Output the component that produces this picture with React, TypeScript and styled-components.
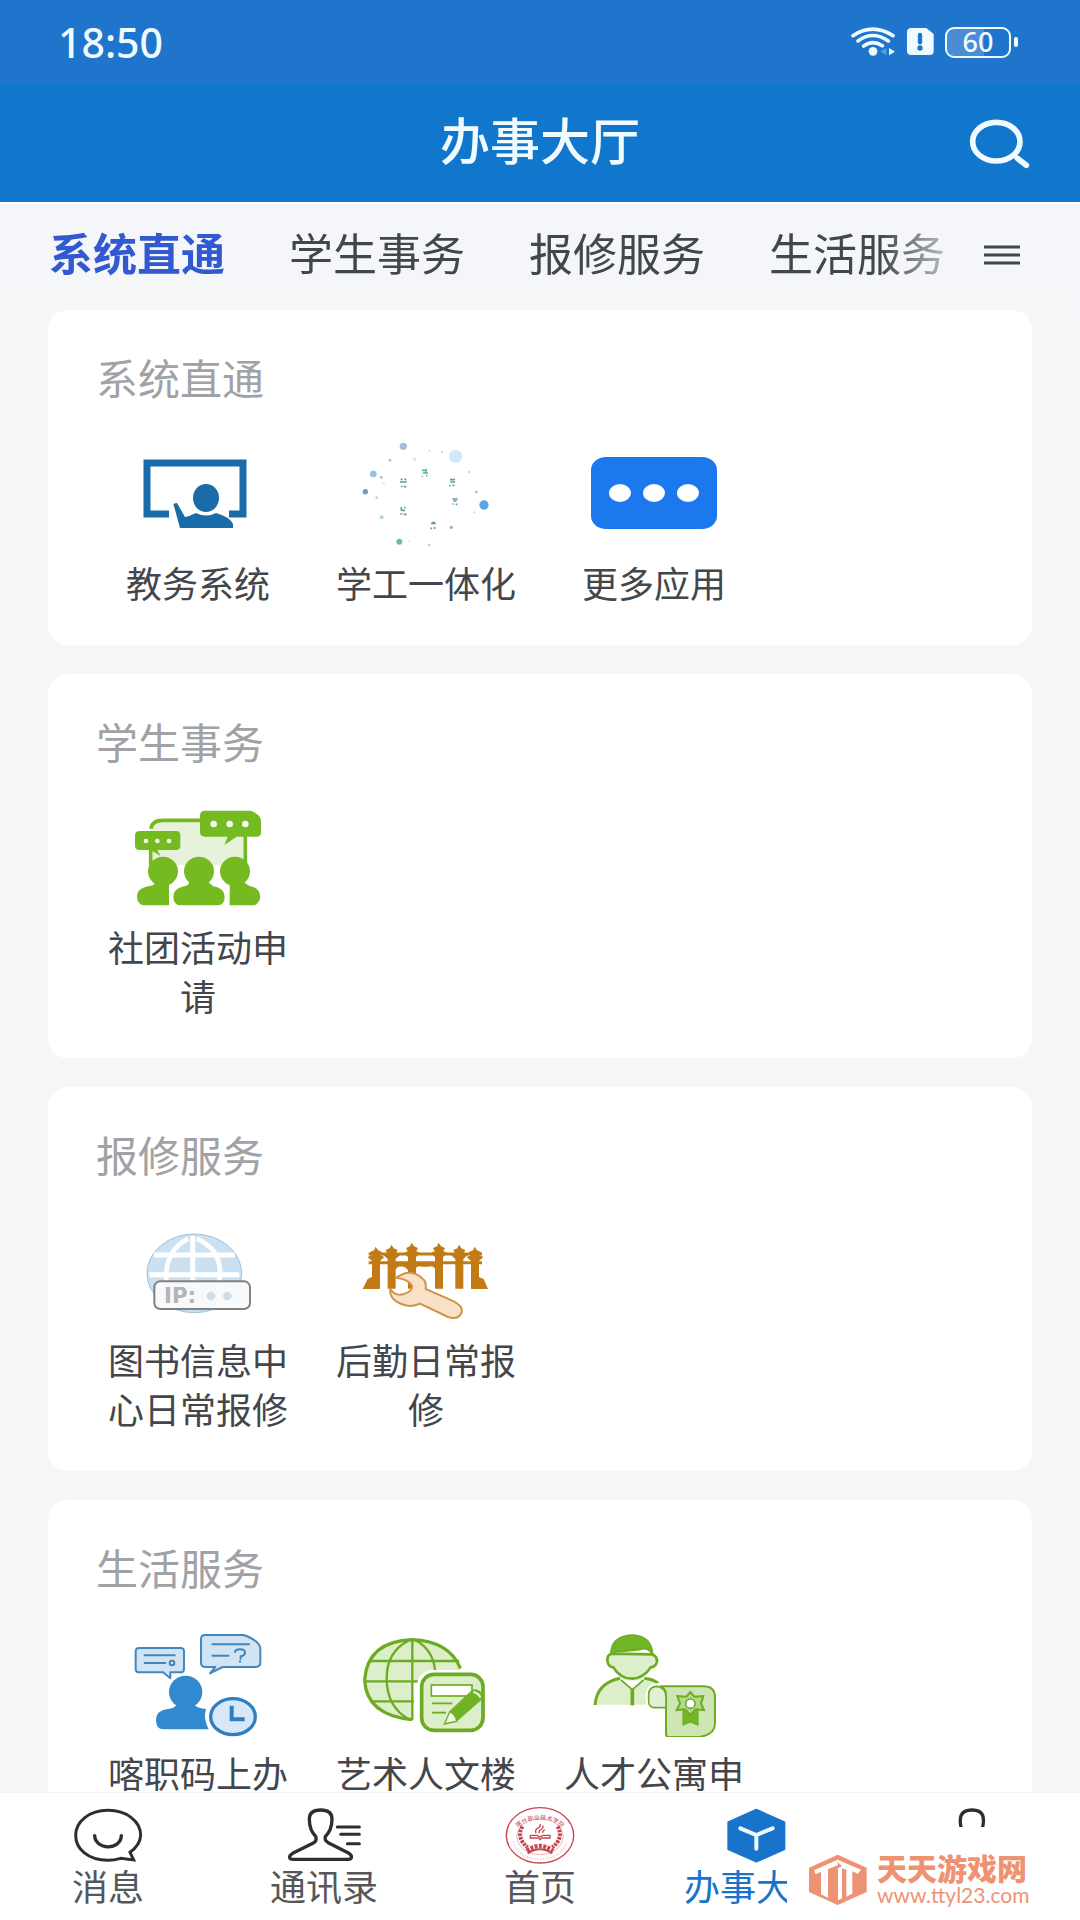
import { useState } from 'react';
import type { ReactNode } from 'react';
import styled, { createGlobalStyle } from 'styled-components';

const theme = {
  colors: {
    status: '#1e75cb',
    header: '#1177cd',
    onHeader: '#effbff',
    tabs: '#f4f6fb',
    page: '#f4f6f8',
    card: '#ffffff',
    accent: '#3159d0',
    text: '#43464b',
    muted: '#a0a2a6',
    navText: '#55575b',
    watermark: '#ee9274',
  },
};

const GlobalStyle = createGlobalStyle`
  * {
    box-sizing: border-box;
  }
  body {
    margin: 0;
    font-family: 'Noto Sans', 'Noto Sans CJK SC', sans-serif;
    color: ${theme.colors.text};
    background: ${theme.colors.page};
  }
  a {
    color: inherit;
    text-decoration: none;
  }
  button {
    padding: 0;
    border: none;
    background: none;
    font: inherit;
    color: inherit;
    cursor: pointer;
  }
`;

/* ---------- service icons ---------- */

const TeachingIcon = () => (
  <ServiceIcon viewBox="1 0 140 110">
    <path d="M42 77H20V26H116V77H102" fill="none" stroke="#1a6ca8" strokeWidth="7" />
    <ellipse cx="79" cy="61" rx="13" ry="14" fill="#1a6ca8" />
    <path
      d="M53 91 L47 69 Q45 66 50 66 L58 80 Q63 79 69 76 Q79 81 89 76 Q103 80 106 87 V91Z"
      fill="#1a6ca8"
    />
  </ServiceIcon>
);

const scatter: [number, number, number, string][] = [
  [190, 49, 11, '#a9bddb'],
  [347, 79, 20, '#d0e8fc'],
  [100, 132, 10, '#92bfe3'],
  [76, 185, 8, '#6f9fae'],
  [432, 225, 14, '#5ba3e4'],
  [178, 335, 9, '#70b9c0'],
  [125, 262, 6, '#b5d5d9'],
  [150, 91, 4, '#a6b8bd'],
  [224, 88, 4, '#cfdde2'],
  [268, 62, 3, '#c9dde2'],
  [306, 66, 3, '#c0d3dc'],
  [388, 126, 4, '#d3dde4'],
  [409, 186, 4, '#9bbcc6'],
  [403, 247, 3, '#c5d5dc'],
  [334, 292, 5, '#9fb3bb'],
  [268, 345, 4, '#b7cfd2'],
  [208, 334, 3, '#dcebed'],
  [124, 142, 4, '#a7bcc2'],
  [131, 160, 4, '#dfe9eb'],
  [110, 203, 4, '#c4d2d8'],
];

const StudentWorkIcon = () => (
  <ServiceIcon viewBox="48 21 420 330">
    {scatter.map(([cx, cy, r, fill]) => (
      <circle key={`${cx}-${cy}`} cx={cx} cy={cy} r={r} fill={fill} />
    ))}
    <path
      d="M246 121h9M258 116v13M248 129h16M258 137h4M245 139h3"
      stroke="#57b5a5"
      strokeWidth="5"
    />
    <path
      d="M182 148h6M193 148h6M180 156h20M183 169h4M191 170h8M330 149h15M331 156h14M328 167h4M337 166h6M337 207h16M340 213h10M337 222h4M347 223h5M184 231v11M195 230v5M184 241h11M181 252h6M191 253h9M273 280h14M276 278h9M271 295h5M280 294h7"
      stroke="#6697a4"
      strokeWidth="5"
    />
  </ServiceIcon>
);

const MoreAppsIcon = () => (
  <ServiceIcon viewBox="1 0 140 110">
    <rect x="8" y="20" width="126" height="72" rx="15" ry="13" fill="#1b79ed" />
    {[37, 71, 105].map((cx) => (
      <ellipse key={cx} cx={cx} cy="56" rx="11" ry="9" fill="#fff" />
    ))}
  </ServiceIcon>
);

const ClubIcon = () => (
  <ServiceIcon viewBox="24 33 420 330">
    <path d="M92 110 Q98 91 125 91H376V225H92Z" fill="#e6f2da" />
    <path
      d="M93 116 Q96 91 128 91H245M376 135V225M92 180V225"
      fill="none"
      stroke="#74b823"
      strokeWidth="11"
    />
    <path
      d="M255 62H392Q423 74 423 92V128Q423 140 410 140H350L313 165L323 140H255Q240 140 240 126V76Q240 62 255 62Z"
      fill="#76ba21"
    />
    <path
      d="M60 123H168Q181 123 181 136V168Q181 180 168 180H112L122 198L92 180H60Q45 180 45 168V136Q45 123 60 123Z"
      fill="#76ba21"
    />
    <g fill="#f4faec">
      <circle cx="281" cy="102" r="10" />
      <circle cx="329" cy="102" r="10" />
      <circle cx="376" cy="102" r="10" />
      <circle cx="78" cy="153" r="7" />
      <circle cx="112" cy="153" r="7" />
      <circle cx="147" cy="153" r="7" />
    </g>
    <g fill="#76ba21">
      <ellipse cx="129" cy="244" rx="45" ry="44" />
      <ellipse cx="237" cy="244" rx="45" ry="44" />
      <ellipse cx="345" cy="244" rx="45" ry="44" />
      <path d="M104 276Q106 287 84 289Q51 295 51 320Q51 340 70 346H147V276Z" />
      <path d="M208 276Q206 288 187 290Q160 296 160 320Q160 346 184 346H290Q314 346 314 320Q312 294 280 289L264 276Z" />
      <path d="M329 276V346H405Q421 334 421 320Q418 292 390 289L370 276Z" />
    </g>
  </ServiceIcon>
);

const IpIcon = () => (
  <ServiceIcon viewBox="24 12 420 330">
    <ellipse cx="223" cy="190" rx="142" ry="118" fill="#cbe1f2" stroke="#a3bfd3" strokeWidth="3" />
    <g fill="none" stroke="#fff">
      <path d="M218 78V215M102 135H344M88 194H358" strokeWidth="15" />
      <path d="M205 86Q133 122 139 214M230 86Q312 122 298 214" strokeWidth="14" />
    </g>
    <rect x="103" y="214" width="287" height="83" rx="18" fill="#f8f9fa" stroke="#7f8184" strokeWidth="6" />
    <text x="132" y="280" fontFamily="DejaVu Sans" fontSize="64" fontWeight="700" fill="#b4b4b5">
      IP:
    </text>
    <circle cx="273" cy="258" r="13" fill="#cedded" />
    <circle cx="322" cy="258" r="13" fill="#cedded" />
  </ServiceIcon>
);

const posts = [767, 814, 875, 956, 1017, 1064];

const RepairIcon = () => (
  <ServiceIcon viewBox="708 12 420 330">
    <path d="M746 132H1086M746 158H1086" stroke="#c27a14" strokeWidth="9" />
    {posts.map((x, i) => {
      const top = i === 2 || i === 3 ? 98 : i === 1 || i === 4 ? 104 : 110;
      return (
        <path
          key={x}
          d={`M${x} ${top}l7 11l12 5l-5 10l12 5l-13 12V236h-24V${top + 43}l-13 -12l12 -5l-5 -10l12 -5Z`}
          fill="#c27a14"
        />
      );
    })}
    <path
      d="M776 182Q772 193 743 207L728 237H776ZM1055 182Q1060 196 1091 207L1104 237H1055ZM842 170Q833 168 824 182V158H865V182Q855 168 842 170ZM885 162H946V176Q937 166 925 170H906Q895 166 885 176Z"
      fill="#c27a14"
    />
    <path
      d="M829 203Q875 170 913 211Q919 221 917 237L1003 275Q1032 292 1024 309Q1014 331 984 321L900 281Q866 297 830 275Q807 260 811 237Q825 259 850 253Q881 243 875 226Q865 208 829 203Z"
      fill="#f8e1c6"
      stroke="#cf934a"
      strokeWidth="6"
    />
  </ServiceIcon>
);

const CodeServiceIcon = () => (
  <ServiceIcon viewBox="24 21 420 330">
    <g fill="#d0e4f6" stroke="#4388bd" strokeWidth="6" strokeLinejoin="round">
      <path d="M58 84H181Q192 84 192 94V146Q192 157 181 157H151V175L129 157H58Q47 157 47 146V94Q47 84 58 84Z" />
      <path d="M255 45H370Q421 62 421 88V127Q421 141 407 141H308L270 160L286 141H255Q243 141 243 127V58Q243 45 255 45Z" />
    </g>
    <g fill="none" stroke="#4584b4" strokeWidth="6" strokeLinecap="round">
      <path d="M74 106H164M74 129H136M277 73H387M277 107H325" />
      <circle cx="156" cy="129" r="7" />
      <path d="M345 96Q347 88 360 88Q375 88 375 98Q375 106 362 109V116M360 124V125" />
    </g>
    <g fill="#3289cd">
      <ellipse cx="197" cy="216" rx="50" ry="49" />
      <path d="M170 253Q166 265 143 267Q108 272 108 300Q108 328 130 328H266Q249 297 258 267Q231 266 222 253Z" />
    </g>
    <ellipse cx="339" cy="290" rx="67" ry="54" fill="#d7e9f8" stroke="#2e7fc0" strokeWidth="10" />
    <path d="M335 257V298H374" fill="none" stroke="#2e7fc0" strokeWidth="12" />
  </ServiceIcon>
);

const ArtBuildingIcon = () => (
  <ServiceIcon viewBox="708 21 420 330">
    <path
      d="M877 300Q735 288 734 180Q742 64 877 59Q1000 63 1026 158V190H877Z"
      fill="#dcefca"
    />
    <g fill="none" stroke="#6dac22">
      <path d="M877 299Q739 286 734 180Q742 64 877 59Q989 64 1021 145" strokeWidth="10" />
      <path
        d="M877 60V300M747 123H1017M736 184H900M757 244H882M867 61Q798 95 800 180Q802 262 867 298M887 61Q939 90 945 150"
        strokeWidth="7"
      />
    </g>
    <rect x="892" y="150" width="210" height="200" rx="44" fill="#fff" />
    <rect x="905" y="163" width="184" height="168" rx="37" fill="#dceeca" stroke="#6dac22" strokeWidth="11" />
    <rect x="934" y="195" width="122" height="33" fill="#fff" stroke="#6dac22" strokeWidth="5" />
    <path d="M936 250H997M936 278H978" stroke="#6dac22" strokeWidth="5" />
    <path d="M990 272L1058 208Q1078 206 1088 222L1084 240L1010 305Z" fill="#70b425" />
    <path d="M990 274L973 312L1009 304Q1011 287 990 274Z" fill="#eef7e5" stroke="#6dac22" strokeWidth="4" />
    <path d="M1060 216Q1077 220 1081 233" fill="none" stroke="#eef7e5" strokeWidth="6" />
  </ServiceIcon>
);

const TalentFlatIcon = () => (
  <ServiceIcon viewBox="492 21 420 330">
    <path d="M525 254Q530 190 600 175H676Q700 178 715 190L690 254Z" fill="#dcefca" />
    <path
      d="M573 101Q559 106 563 126Q566 141 580 142Q600 176 637 176Q672 174 692 142Q709 140 711 124Q711 109 697 103Z"
      fill="#dcefca"
      stroke="#6dac22"
      strokeWidth="8"
    />
    <path
      d="M572 104Q574 47 637 45Q694 47 698 103Q683 81 662 88Q614 94 592 94Z"
      fill="#72b627"
      stroke="#6dac22"
      strokeWidth="5"
    />
    <path d="M601 176L637 212L673 176Q638 188 601 176Z" fill="#fff" />
    <g fill="none" stroke="#6dac22">
      <path d="M525 255Q530 190 600 175M673 175Q700 178 715 190" strokeWidth="9" />
      <path d="M603 180L637 209L671 180" strokeWidth="5" />
      <path d="M637 206V256" strokeWidth="11" />
    </g>
    <path
      d="M738 263H702Q686 262 686 244V222Q688 201 708 199H850Q885 202 885 230V318Q880 350 838 351H746Q738 351 738 343Z"
      fill="#fff"
      stroke="#fff"
      strokeWidth="18"
    />
    <path
      d="M720 199Q740 205 738 230V343Q738 351 746 351H838Q885 344 885 310V230Q884 199 850 199Z"
      fill="#cde6b4"
      stroke="#6dac22"
      strokeWidth="6"
    />
    <path
      d="M738 263H702Q686 262 686 244V222Q688 201 708 199Q738 201 738 231Z"
      fill="#e2f1d5"
      stroke="#6dac22"
      strokeWidth="5"
    />
    <path d="M787 266V318L811 308L836 318V266Z" fill="#72b627" />
    <path
      d="M811 216L823 230L850 228L843 250L852 270L827 268L811 284L795 268L770 270L780 250L772 228L799 230Z"
      fill="#b4d88f"
      stroke="#6dac22"
      strokeWidth="6"
    />
    <circle cx="811" cy="251" r="14" fill="#fff" stroke="#6dac22" strokeWidth="5" />
  </ServiceIcon>
);

/* ---------- bottom bar icons ---------- */

const MessageIcon = () => (
  <NavIcon viewBox="198 78 252 180">
    <g fill="none" stroke="#2e2e2e" strokeWidth="9" strokeLinecap="round">
      <path d="M362 235Q342 241 324 241C264 241 227 207 227 166C227 124 268 91 324 91C380 91 422 124 422 166Q420 195 390 217L401 240Z" />
      <path d="M284 167C286 211 362 212 364 167" strokeWidth="10" />
    </g>
  </NavIcon>
);

const ContactsIcon = () => (
  <NavIcon viewBox="846 78 252 180">
    <g fill="none" stroke="#2e2e2e" strokeWidth="10" strokeLinecap="round" strokeLinejoin="round">
      <path d="M962 90C941 90 928 98 928 117C928 145 936 156 947 169Q952 182 940 189L878 220C864 229 867 238 880 238H1044C1058 237 1057 227 1047 220L986 189Q972 181 976 170C987 157 996 145 996 117C996 98 983 90 962 90Z" />
      <path d="M1012 141H1078M1022 163H1078M1042 191H1078" strokeWidth="9" />
    </g>
  </NavIcon>
);

const CampusIcon = () => (
  <NavIcon viewBox="114 78 252 180">
    <defs>
      <path id="crest-top" d="M163 158A82 60 0 0 1 317 158" />
    </defs>
    <g fill="none" stroke="#c8464f">
      <ellipse cx="240" cy="166" rx="101" ry="83" strokeWidth="4" />
      <ellipse cx="240" cy="170" rx="69" ry="54" strokeWidth="2" opacity="0.6" />
      <path d="M160 184Q174 235 240 238Q306 235 320 184" strokeWidth="5" strokeDasharray="3 5" opacity="0.35" />
      <path d="M187 139Q168 174 203 202M293 139Q312 174 277 202" strokeWidth="12" strokeDasharray="8 3" />
      <path d="M201 213Q240 183 279 213" strokeWidth="13" strokeDasharray="9 4" />
      <path d="M203 220Q240 196 277 220" strokeWidth="6" />
      <path d="M211 166V174H235L240 179L245 174H270V166H248L240 171L232 166Z" strokeWidth="4" />
      <path
        d="M228 160Q223 148 236 143Q243 138 240 132M238 160Q235 151 245 147Q251 143 248 137M248 159Q247 153 254 149"
        strokeWidth="4"
      />
    </g>
    <text fontFamily="Noto Sans CJK SC" fontSize="18" fill="#c8464f">
      <textPath href="#crest-top" startOffset="50%" textAnchor="middle">
        喀什职业技术学院
      </textPath>
    </text>
  </NavIcon>
);

const HallIcon = () => (
  <NavIcon viewBox="762 78 252 180">
    <path
      d="M889 88L974 126V208L889 246L804 208V126Z"
      fill="#1874cb"
      stroke="#1874cb"
      strokeWidth="4"
      strokeLinejoin="round"
    />
    <path
      d="M841 145L889 165L938 145M889 165V206"
      fill="none"
      stroke="#effaff"
      strokeWidth="12"
      strokeLinecap="round"
    />
  </NavIcon>
);

const ProfileIcon = () => (
  <NavIcon viewBox="450 78 252 180">
    <path d="M545 150C535 112 541 90 576 90C611 90 616 112 606 150" fill="none" stroke="#2e2e2e" strokeWidth="10" />
  </NavIcon>
);

/* ---------- data ---------- */

type Service = { name: string; icon: ReactNode };
type Group = { title: string; services: Service[] };

const groups: Group[] = [
  {
    title: '系统直通',
    services: [
      { name: '教务系统', icon: <TeachingIcon /> },
      { name: '学工一体化', icon: <StudentWorkIcon /> },
      { name: '更多应用', icon: <MoreAppsIcon /> },
    ],
  },
  {
    title: '学生事务',
    services: [{ name: '社团活动申请', icon: <ClubIcon /> }],
  },
  {
    title: '报修服务',
    services: [
      { name: '图书信息中心日常报修', icon: <IpIcon /> },
      { name: '后勤日常报修', icon: <RepairIcon /> },
    ],
  },
  {
    title: '生活服务',
    services: [
      { name: '喀职码上办', icon: <CodeServiceIcon /> },
      { name: '艺术人文楼', icon: <ArtBuildingIcon /> },
      { name: '人才公寓申', icon: <TalentFlatIcon /> },
    ],
  },
];

const navItems = [
  { label: '消息', icon: <MessageIcon /> },
  { label: '通讯录', icon: <ContactsIcon /> },
  { label: '首页', icon: <CampusIcon /> },
  { label: '办事大厅', icon: <HallIcon />, active: true },
];

/* ---------- page ---------- */

const App = () => {
  const [current, setCurrent] = useState(groups[0].title);

  return (
    <Screen>
      <GlobalStyle />
      <StatusBar>
        <Clock>18:50</Clock>
        <StatusIcons>
          <svg width="46" height="36" viewBox="87 72 138 108" aria-hidden="true">
            <g fill="none" stroke="#effbff" strokeWidth="11" strokeLinecap="round">
              <path d="M96 107Q155 68 216 107M111 123Q155 90 202 123M128 138Q155 118 184 137" />
            </g>
            <circle cx="156" cy="154" r="13" fill="#effbff" />
            <path d="M196 145V164L178 155Z" fill="#5aa0e4" />
            <path d="M204 144V166L222 155Z" fill="#effbff" />
          </svg>
          <svg width="29" height="36" viewBox="255 72 87 108" aria-hidden="true">
            <path
              d="M271 84H316L338 102V153Q338 165 326 165H271Q258 165 258 153V96Q258 84 271 84Z"
              fill="#effbff"
            />
            <path d="M297 105V127" stroke="#1e75cb" strokeWidth="13" strokeLinecap="round" />
            <circle cx="297" cy="144" r="8" fill="#1e75cb" />
          </svg>
          <Battery>
            <BatteryBody>60</BatteryBody>
            <BatteryTip />
          </Battery>
        </StatusIcons>
      </StatusBar>

      <Header>
        <Title>办事大厅</Title>
        <SearchButton type="button" aria-label="搜索">
          <svg width="70" height="64" viewBox="435 330 210 192" aria-hidden="true">
            <g fill="none" stroke="#effbff" strokeWidth="17" strokeLinecap="round">
              <ellipse cx="529" cy="422" rx="71" ry="58" />
              <path d="M592 472L619 493" />
            </g>
          </svg>
        </SearchButton>
      </Header>

      <TabBar>
        <Tabs>
          {groups.map(({ title }) => (
            <Tab key={title} type="button" $active={title === current} onClick={() => setCurrent(title)}>
              {title}
            </Tab>
          ))}
        </Tabs>
        <MenuButton type="button" aria-label="全部分类">
          <svg width="36" height="24" viewBox="0 0 36 24" aria-hidden="true">
            <path d="M0 4H36M0 12H36M0 20H36" stroke="#43464b" strokeWidth="3" />
          </svg>
        </MenuButton>
      </TabBar>

      <Content>
        {groups.map(({ title, services }) => (
          <Card key={title}>
            <CardTitle>{title}</CardTitle>
            <ServiceGrid>
              {services.map(({ name, icon }) => (
                <ServiceLink key={name} href="#">
                  {icon}
                  <ServiceName>{name}</ServiceName>
                </ServiceLink>
              ))}
            </ServiceGrid>
          </Card>
        ))}
      </Content>

      <BottomBar>
        {navItems.map(({ label, icon, active }) => (
          <NavLink key={label} href="#" $active={active}>
            {icon}
            <span>{label}</span>
          </NavLink>
        ))}
        <NavLink href="#" aria-label="我的">
          <ProfileIcon />
        </NavLink>
        <Watermark>
          <svg width="58" height="52" viewBox="88 219 174 156" aria-hidden="true">
            <path d="M174 221L261 260V333L174 372L88 333V260Z" fill="#ee9274" />
            <path
              d="M103 268L174 236L244 266L235 278L218 271V338L200 347V266L187 262V352L175 358V252L145 265V350L124 340V272L108 280Z"
              fill="#fff"
            />
            <path d="M174 243V262L187 256" fill="#ee9274" />
          </svg>
          <div>
            <WatermarkName>天天游戏网</WatermarkName>
            <WatermarkUrl>www.ttyl23.com</WatermarkUrl>
          </div>
        </Watermark>
      </BottomBar>
    </Screen>
  );
};

export default App;

/* ---------- styles ---------- */

const Screen = styled.div`
  height: 100vh;
  display: flex;
  flex-direction: column;
  overflow: hidden;
`;

const StatusBar = styled.div`
  flex: none;
  height: 84px;
  padding: 0 62px 0 58px;
  display: flex;
  align-items: center;
  justify-content: space-between;
  color: ${theme.colors.onHeader};
  background: ${theme.colors.status};
`;

const Clock = styled.time`
  font-size: 41px;
  line-height: 40px;
  font-weight: 500;
`;

const StatusIcons = styled.div`
  display: flex;
  align-items: center;
  gap: 10px;
`;

const Battery = styled.div`
  display: flex;
  align-items: center;
  gap: 3px;
`;

const BatteryBody = styled.span`
  width: 66px;
  height: 31px;
  border: 2px solid ${theme.colors.onHeader};
  border-radius: 9px;
  font-size: 27px;
  line-height: 26px;
  font-weight: 500;
  text-align: center;
  background: linear-gradient(to right, #4a8dd4 60%, transparent 60%);
`;

const BatteryTip = styled.span`
  width: 4px;
  height: 10px;
  border-radius: 2px;
  background: ${theme.colors.onHeader};
`;

const Header = styled.header`
  flex: none;
  height: 118px;
  padding: 0 45px;
  display: grid;
  grid-template-columns: 1fr auto 1fr;
  align-items: center;
  color: ${theme.colors.onHeader};
  background: ${theme.colors.header};
`;

const Title = styled.h1`
  grid-column: 2;
  margin: 0;
  padding-bottom: 4px;
  font-size: 50px;
  line-height: 60px;
  font-weight: 500;
`;

const SearchButton = styled.button`
  justify-self: end;
  svg {
    display: block;
  }
`;

const TabBar = styled.div`
  flex: none;
  height: 108px;
  padding: 0 60px 4px 49px;
  display: flex;
  align-items: center;
  gap: 24px;
  border-top: 2px solid #fff;
  background: linear-gradient(${theme.colors.tabs}, ${theme.colors.page});
`;

const Tabs = styled.nav`
  flex: 1;
  min-width: 0;
  display: flex;
  gap: 64px;
  overflow: hidden;
  mask-image: linear-gradient(to right, #000 calc(100% - 80px), rgba(0, 0, 0, 0.2));
`;

const Tab = styled.button<{ $active: boolean }>`
  flex: none;
  padding-bottom: 2px;
  font-size: 44px;
  line-height: 60px;
  font-weight: ${({ $active }) => ($active ? 700 : 400)};
  color: ${({ $active }) => ($active ? theme.colors.accent : theme.colors.text)};
`;

const MenuButton = styled.button`
  flex: none;
  svg {
    display: block;
  }
`;

const Content = styled.main`
  flex: 1;
  min-height: 0;
  padding: 0 48px;
  display: flex;
  flex-direction: column;
  gap: 29px;
  overflow-y: auto;
  scrollbar-width: none;
`;

const Card = styled.section`
  flex: none;
  padding: 44px 36px 36px;
  border-radius: 20px;
  background: ${theme.colors.card};
`;

const CardTitle = styled.h2`
  margin: 0 0 33px;
  padding: 0 12px;
  font-size: 42px;
  line-height: 50px;
  font-weight: 400;
  color: ${theme.colors.muted};
`;

const ServiceGrid = styled.div`
  display: grid;
  grid-template-columns: repeat(4, 1fr);
`;

const ServiceLink = styled.a`
  display: flex;
  flex-direction: column;
  align-items: center;
  gap: 13px;
`;

const ServiceIcon = styled.svg`
  width: 140px;
  height: 110px;
`;

const ServiceName = styled.span`
  max-width: 180px;
  font-size: 36px;
  line-height: 49px;
  text-align: center;
`;

const BottomBar = styled.nav`
  position: relative;
  flex: none;
  height: 128px;
  padding-top: 13px;
  display: grid;
  grid-template-columns: repeat(5, 1fr);
  align-items: start;
  border-top: 1px solid #f3f4f6;
  background: #fff;
`;

const NavLink = styled.a<{ $active?: boolean }>`
  display: flex;
  flex-direction: column;
  align-items: center;
  gap: 2px;
  font-size: 36px;
  line-height: 40px;
  white-space: nowrap;
  color: ${({ $active }) => ($active ? '#1874cb' : theme.colors.navText)};
`;

const NavIcon = styled.svg`
  width: 84px;
  height: 60px;
`;

// sits over the right end of the bottom bar
const Watermark = styled.div`
  position: absolute;
  right: 0;
  bottom: 0;
  width: 293px;
  height: 93px;
  padding: 12px 0 0 22px;
  display: flex;
  align-items: center;
  gap: 10px;
  color: ${theme.colors.watermark};
  background: #fff;
`;

const WatermarkName = styled.div`
  font-size: 30px;
  line-height: 30px;
  font-weight: 900;
`;

const WatermarkUrl = styled.div`
  font-family: Lato, sans-serif;
  font-size: 21px;
  line-height: 22px;
`;
